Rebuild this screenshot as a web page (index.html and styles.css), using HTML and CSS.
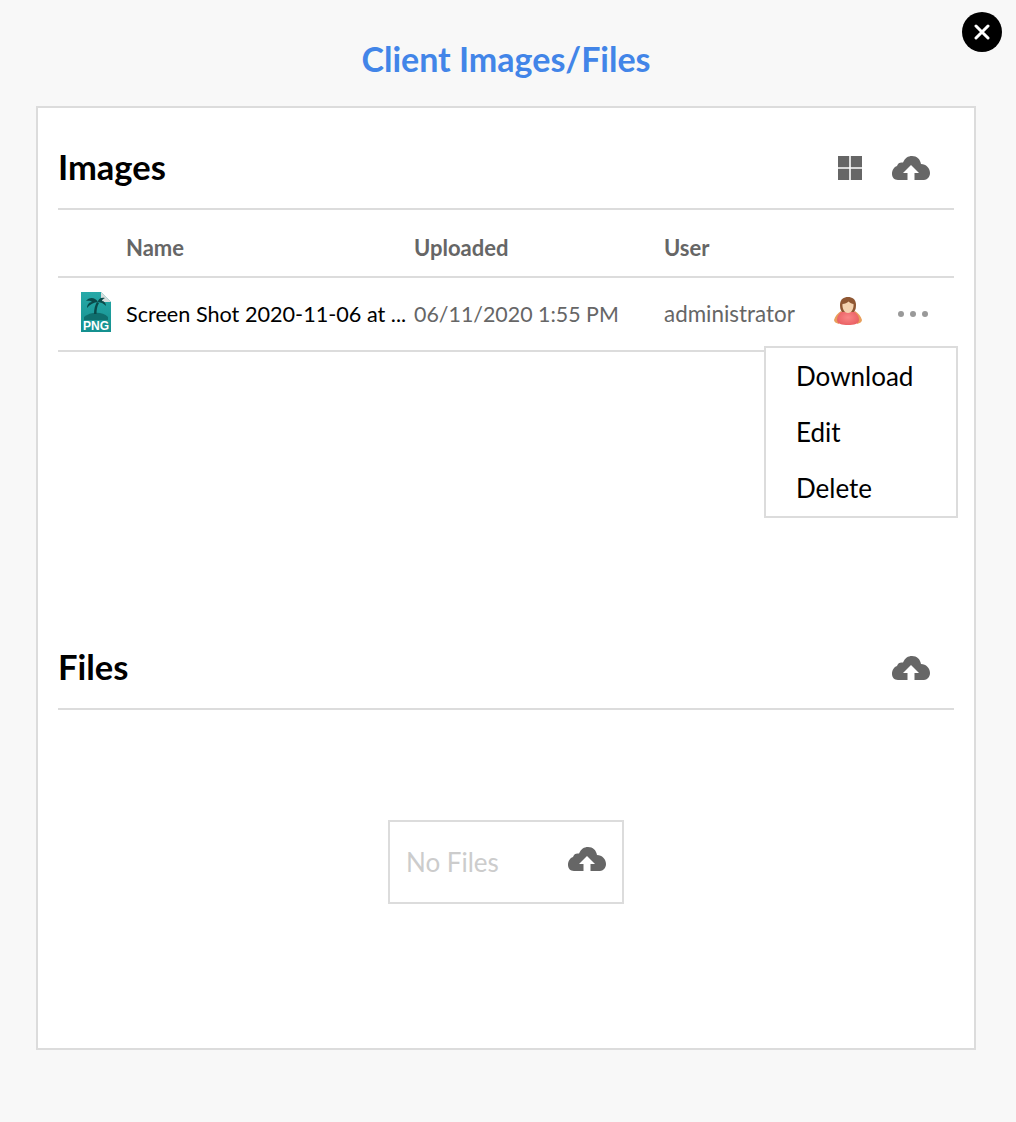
FILE: index.html
```html
<!DOCTYPE html>
<html lang="en">
<head>
<meta charset="utf-8">
<title>Client Images/Files</title>
<link rel="stylesheet" href="styles.css">
</head>
<body>
<svg class="defs" width="0" height="0" aria-hidden="true">
  <defs>
    <linearGradient id="teal" x1="0" y1="0" x2="0" y2="1">
      <stop offset="0" stop-color="#27a9a8"/>
      <stop offset="1" stop-color="#14908f"/>
    </linearGradient>
    <radialGradient id="shirt" cx="0.5" cy="0.5" r="0.6">
      <stop offset="0" stop-color="#f98686"/>
      <stop offset="1" stop-color="#e85c60"/>
    </radialGradient>
  </defs>
  <symbol id="cloud" viewBox="0 0 38 24">
    <path d="M6 24C2 24 0 21 0 18C0 14 2 11 5 10C6 7 8 6 11 6.500C13 2 16 0 20 0C25 0 28 3 29 8C34 8 38 12 38 17C38 21 35 24 32 24H22.500V17H27L19 9L11 17H15.500V24Z"/>
  </symbol>
</svg>
<button class="close" aria-label="Close">
  <svg viewBox="0 0 16 16" width="16" height="16"><path d="M2 2L14 14M14 2L2 14" stroke="#fff" stroke-width="3" stroke-linecap="round"/></svg>
</button>
<h1 class="title">Client Images/Files</h1>
<main class="card">
  <section class="images">
    <header class="section-head">
      <h2>Images</h2>
      <div class="tools">
        <svg class="grid-icon" viewBox="0 0 24 24" width="24" height="24"><path d="M0 0H11.200V11.200H0ZM12.800 0H24V11.200H12.800ZM0 12.800H11.200V24H0ZM12.800 12.800H24V24H12.800Z"/></svg>
        <svg class="cloud" width="38" height="24"><use href="#cloud"/></svg>
      </div>
    </header>
    <div class="row head-row">
      <span></span><span>Name</span><span>Uploaded</span><span>User</span>
    </div>
    <div class="row file-row">
      <svg class="png" viewBox="0 0 30 40" width="30" height="40">
        <path d="M0 0H20L30 10V40H0Z" fill="url(#teal)"/>
        <path d="M20 0L30 10H20Z" fill="#d5dcdc"/>
        <path d="M3 25C9 20 21 19 27 25V28H3Z" fill="#0f6f6e"/>
        <path d="M13 22C13 17 14 13 16 10L18 11C16 14 15.500 18 15.500 22Z" fill="#0a4a4a"/>
        <path d="M17 10C14 5 8 5 5 9C8 8.500 10 9 11 10C8 10 6 13 6 16C9 12 13 10.500 17 10C17 7 20 5 24 6C22 7 21 8 21 9C23 9 25 11 25 14C22 11 20 10.500 17 10Z" fill="#0a4a4a"/>
        <text x="15" y="37.500" class="png-label">PNG</text>
      </svg>
      <span class="name">Screen Shot 2020-11-06 at ...</span>
      <span class="date">06/11/2020 1:55 PM</span>
      <span class="user">administrator</span>
      <svg class="avatar" viewBox="0 0 30 30" width="30" height="30">
        <path d="M1 24C2 20 5 17 8 15L10 18L6 28C3 27 1 26 1 24ZM29 24C28 20 25 17 22 15L20 18L24 28C27 27 29 26 29 24Z" fill="#e8a05c"/>
        <path d="M4 24C4 19 8 14 15 14C22 14 26 19 26 24C26 28 21 29 15 29C9 29 4 28 4 24Z" fill="url(#shirt)"/>
        <path d="M7 9C7 3 11 1 15 1C19 1 23 3 23 9C23 12 22.500 14 21 16H9C7.500 14 7 12 7 9Z" fill="#8f5733"/>
        <path d="M9.500 8C12 8 14 7 15.500 5.500C17 7 19 8 20.500 8C21 12 19 17 15 17C11 17 9 12 9.500 8Z" fill="#f4d3b0"/>
      </svg>
      <span class="dots"><i></i><i></i><i></i></span>
    </div>
    <ul class="menu">
      <li>Download</li>
      <li>Edit</li>
      <li>Delete</li>
    </ul>
  </section>
  <section class="files">
    <header class="section-head">
      <h2>Files</h2>
      <div class="tools">
        <svg class="cloud" width="38" height="24"><use href="#cloud"/></svg>
      </div>
    </header>
    <div class="empty-wrap">
      <div class="empty">
        <span>No Files</span>
        <svg class="cloud" width="38" height="24"><use href="#cloud"/></svg>
      </div>
    </div>
  </section>
</main>
</body>
</html>
```
FILE: styles.css
```css
* { box-sizing: border-box; }
html, body { margin: 0; }
body {
  position: relative;
  height: 1122px;
  padding: 0 40px 0 36px;
  background: #f8f8f8;
  font-family: Lato, "Open Sans", sans-serif;
  color: #000;
  overflow: hidden;
}
.defs { position: absolute; }
.close {
  position: absolute;
  top: 12px;
  left: 962px;
  width: 40px;
  height: 40px;
  padding: 0;
  border: 0;
  border-radius: 50%;
  background: #000;
  display: flex;
  align-items: center;
  justify-content: center;
}
.title {
  margin: 0;
  height: 106px;
  padding-top: 39px;
  text-align: center;
  font-size: 34px;
  line-height: 40px;
  font-weight: 700;
  color: #4285e8;
}
.card {
  width: 940px;
  height: 944px;
  padding: 0 20px;
  background: #fff;
  border: 2px solid #dcdcdc;
}
.images { position: relative; height: 500px; }
.section-head {
  height: 102px;
  padding: 33px 24px 0 0;
  display: flex;
  justify-content: space-between;
  align-items: flex-start;
  border-bottom: 2px solid #dcdcdc;
}
.section-head h2 {
  margin: 0;
  font-size: 34.500px;
  line-height: 52px;
  font-weight: 700;
}
.tools {
  display: flex;
  align-items: center;
  gap: 30px;
  height: 54px;
}
.grid-icon, .cloud { fill: #666; }
.row {
  display: grid;
  grid-template-columns: 68px 288px 250px 169px 64px 1fr;
  align-items: center;
  font-size: 22px;
  color: #666;
}
.head-row {
  height: 68px;
  padding-top: 8px;
  font-weight: 700;
  border-bottom: 2px solid #dcdcdc;
}
.file-row {
  height: 74px;
  padding-bottom: 1px;
  border-bottom: 2px solid #dcdcdc;
}
.png { margin: 0 0 3px 23px; }
.png-label {
  font-family: "Liberation Sans", sans-serif;
  font-size: 12px;
  font-weight: 700;
  fill: #fff;
  text-anchor: middle;
}
.name {
  color: #000;
  font-size: 21.650px;
  white-space: nowrap;
}
.date { font-size: 21.400px; }
.user { font-size: 22.400px; }
.avatar { margin: 0 0 5px 0; }
.dots { display: flex; gap: 6px; margin-left: 1px; }
.dots i {
  width: 6px;
  height: 6px;
  border-radius: 50%;
  background: #999;
}
.menu {
  position: absolute;
  top: 238px;
  left: 706px;
  width: 194px;
  height: 172px;
  margin: 0;
  padding: 1px 0 0 30px;
  list-style: none;
  background: #fff;
  border: 2px solid #dcdcdc;
  font-size: 26px;
}
.menu li { height: 56px; line-height: 54px; }
.empty-wrap {
  display: flex;
  justify-content: center;
  padding-top: 110px;
}
.empty {
  width: 236px;
  height: 84px;
  padding: 0 16px 0 16px;
  display: flex;
  align-items: center;
  justify-content: space-between;
  border: 2px solid #dcdcdc;
  font-size: 26px;
  color: #ccc;
}
.empty .cloud { margin-bottom: 6px; }
```
